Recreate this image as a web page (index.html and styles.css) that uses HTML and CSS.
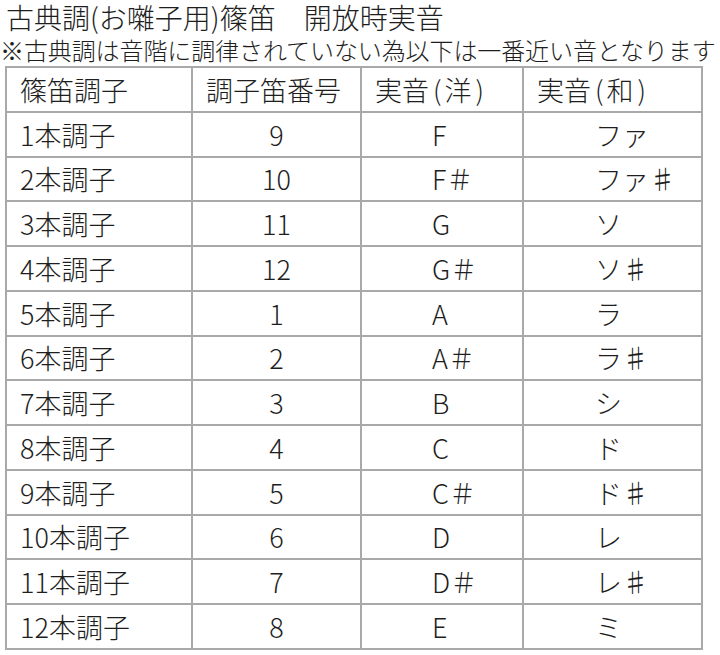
FILE: index.html
```html
<!DOCTYPE html>
<html lang="ja">
<head>
<meta charset="utf-8">
<title>古典調(お囃子用)篠笛 開放時実音</title>
<link rel="stylesheet" href="styles.css">
</head>
<body>
<div class="page">
  <h1 class="title">古典調(お囃子用)篠笛　開放時実音</h1>
  <p class="note">※古典調は音階に調律されていない為以下は一番近い音となります</p>
  <table class="pitch-table">
    <colgroup>
      <col class="c1"><col class="c2"><col class="c3"><col class="c4">
    </colgroup>
    <thead>
      <tr><th>篠笛調子</th><th>調子笛番号</th><th>実音<span class="paren">(</span>洋<span class="paren">)</span></th><th>実音<span class="paren">(</span>和<span class="paren">)</span></th></tr>
    </thead>
    <tbody>
      <tr><td>1本調子</td><td class="num">9</td><td class="west">F</td><td class="jp">ファ</td></tr>
      <tr><td>2本調子</td><td class="num">10</td><td class="west">F＃</td><td class="jp">ファ♯</td></tr>
      <tr><td>3本調子</td><td class="num">11</td><td class="west">G</td><td class="jp">ソ</td></tr>
      <tr><td>4本調子</td><td class="num">12</td><td class="west">G＃</td><td class="jp">ソ♯</td></tr>
      <tr><td>5本調子</td><td class="num">1</td><td class="west">A</td><td class="jp">ラ</td></tr>
      <tr><td>6本調子</td><td class="num">2</td><td class="west">A＃</td><td class="jp">ラ♯</td></tr>
      <tr><td>7本調子</td><td class="num">3</td><td class="west">B</td><td class="jp">シ</td></tr>
      <tr><td>8本調子</td><td class="num">4</td><td class="west">C</td><td class="jp">ド</td></tr>
      <tr><td>9本調子</td><td class="num">5</td><td class="west">C＃</td><td class="jp">ド♯</td></tr>
      <tr><td>10本調子</td><td class="num">6</td><td class="west">D</td><td class="jp">レ</td></tr>
      <tr><td>11本調子</td><td class="num">7</td><td class="west">D＃</td><td class="jp">レ♯</td></tr>
      <tr><td>12本調子</td><td class="num">8</td><td class="west">E</td><td class="jp">ミ</td></tr>
    </tbody>
  </table>
</div>
</body>
</html>
```

FILE: styles.css
```css
html, body {
  margin: 0;
  padding: 0;
  background: #ffffff;
}

body {
  font-family: "Noto Sans CJK JP", "Noto Sans", sans-serif;
  font-weight: 300;
  color: #1e1e1e;
}

.page {
  width: 720px;
}

.title {
  margin: 0;
  padding-left: 6px;
  font-size: 28px;
  font-weight: 300;
  line-height: 34px;
  white-space: nowrap;
}

.note {
  margin: 0;
  padding-left: 0;
  font-size: 24px;
  line-height: 31px;
  letter-spacing: -0.1px;
  white-space: nowrap;
}

.pitch-table {
  margin: 1px 0 0 5px;
  border-collapse: separate;
  border-spacing: 0;
  table-layout: fixed;
  width: 698px;
  border-top: 2px solid #a9a9a9;
  border-left: 2px solid #a9a9a9;
}

.c1 { width: 186px; }
.c2 { width: 169px; }
.c3 { width: 162px; }
.c4 { width: 179px; }

.pitch-table th,
.pitch-table td {
  box-sizing: border-box;
  height: 44.75px;
  padding: 0 0 0 13px;
  border-right: 2px solid #a9a9a9;
  border-bottom: 2px solid #a9a9a9;
  font-size: 27px;
  font-weight: 300;
  text-align: left;
  vertical-align: middle;
  white-space: nowrap;
  line-height: 1;
}

.pitch-table th .paren {
  margin: 0 3px 0 4px;
}

.pitch-table td.num {
  padding: 0;
  text-align: center;
}

.pitch-table td.west {
  padding-left: 70px;
}

.pitch-table td.jp {
  padding-left: 71px;
}
```
